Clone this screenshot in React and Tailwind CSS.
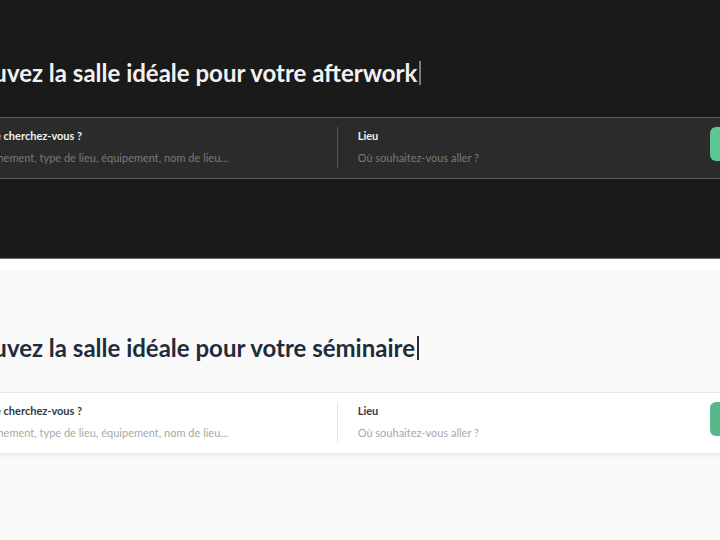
export default function App() {
  const titleFont = { fontFamily: "Lato, 'Noto Sans', sans-serif" };

  return (
    <div className="w-[720px] h-[540px] overflow-hidden bg-white font-['Lato','Noto_Sans',sans-serif]">
      {/* --- BLOC SOMBRE --- */}
      <section className="h-[259px] bg-[#1a1a1a] border-b border-[#6b6b6b]">
        <div className="-ml-[40px] w-[860px] pt-[59px]">
          <h1 className="-ml-px text-[24px] leading-[28px] font-bold text-[#f2f2f2] flex items-center" style={titleFont}>
            Trouvez la salle idéale pour votre afterwork
            <span className="ml-[2px] inline-block w-[2px] h-[24px] bg-[#7a7a7a]"></span>
          </h1>

          <div className="mt-[30px] h-[62px] bg-[#2b2b2b] border-y border-[#5a5a5a] flex items-start pl-[20px]">
            <div className="w-[358px] pt-[10px] flex flex-col gap-[6px]">
              <span className="text-[11px] leading-[16px] font-bold text-[#f0f0f0]">Que cherchez-vous ?</span>
              <span className="text-[11px] leading-[16px] text-[#7a7a7a]">Événement, type de lieu, équipement, nom de lieu...</span>
            </div>
            <div className="mt-[9px] w-px h-[41px] bg-[#555555]"></div>
            <div className="w-[374px] pl-[20px] pt-[10px] flex flex-col gap-[6px]">
              <span className="text-[11px] leading-[16px] font-bold text-[#f0f0f0]">Lieu</span>
              <span className="text-[11px] leading-[16px] text-[#7a7a7a]">Où souhaitez-vous aller ?</span>
            </div>
            <button className="mt-[9px] w-[110px] h-[34px] rounded-md bg-[#5ec595]"></button>
          </div>
        </div>
      </section>

      <div className="h-[11px] bg-white"></div>

      {/* --- BLOC CLAIR --- */}
      <section className="h-[270px] bg-[#fafafa]">
        <div className="-ml-[40px] w-[860px] pt-[64px]">
          <h1 className="-ml-px text-[24px] leading-[28px] font-bold text-[#1f2d3a] flex items-center" style={titleFont}>
            Trouvez la salle idéale pour votre séminaire
            <span className="ml-[2px] inline-block w-[2px] h-[24px] bg-[#1f2d3a]"></span>
          </h1>

          <div className="mt-[30px] h-[62px] bg-white border-y border-[#e6e6e6] shadow-[0_2px_6px_rgba(0,0,0,0.06)] flex items-start pl-[20px]">
            <div className="w-[358px] pt-[10px] flex flex-col gap-[6px]">
              <span className="text-[11px] leading-[16px] font-bold text-[#2f3a44]">Que cherchez-vous ?</span>
              <span className="text-[11px] leading-[16px] text-[#a8a8a8]">Événement, type de lieu, équipement, nom de lieu...</span>
            </div>
            <div className="mt-[9px] w-px h-[41px] bg-[#e6e6e6]"></div>
            <div className="w-[374px] pl-[20px] pt-[10px] flex flex-col gap-[6px]">
              <span className="text-[11px] leading-[16px] font-bold text-[#2f3a44]">Lieu</span>
              <span className="text-[11px] leading-[16px] text-[#a8a8a8]">Où souhaitez-vous aller ?</span>
            </div>
            <button className="mt-[9px] w-[110px] h-[34px] rounded-md bg-[#55b98a]"></button>
          </div>
        </div>
      </section>
    </div>
  );
}
